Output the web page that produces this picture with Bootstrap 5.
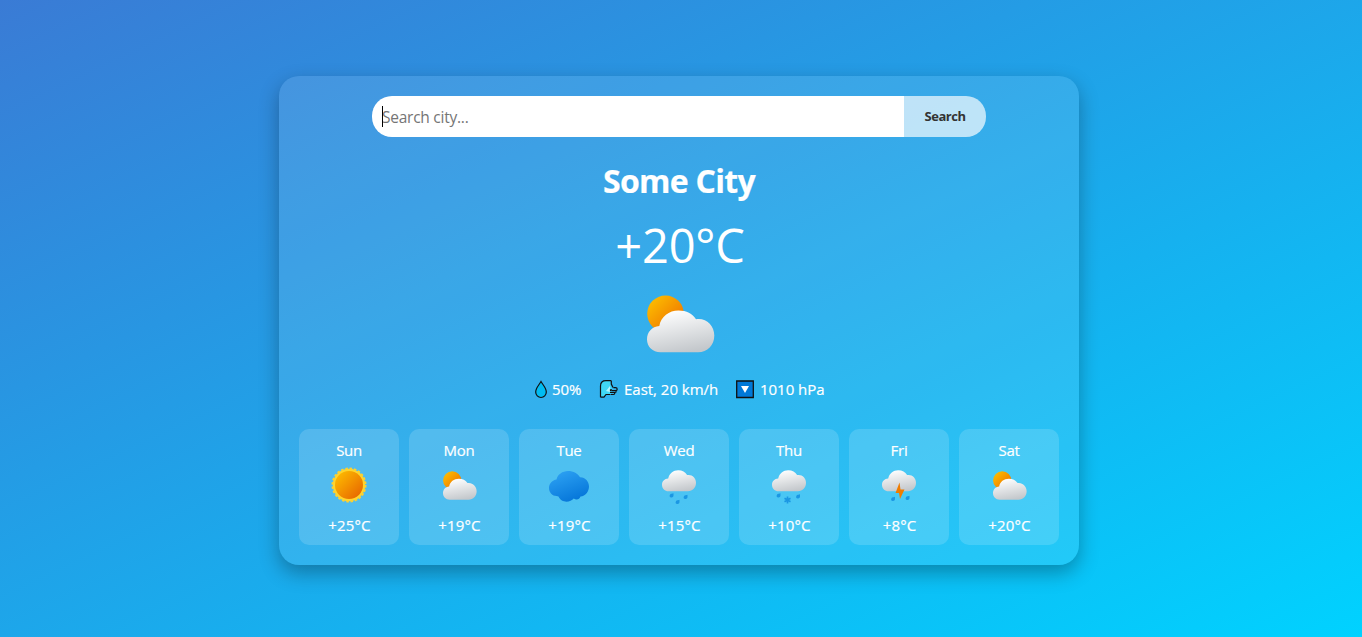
<!DOCTYPE html>
<html lang="en">
<head>
<meta charset="utf-8">
<meta name="viewport" content="width=device-width, initial-scale=1">
<title>Weather</title>
<link rel="stylesheet" href="https://cdn.jsdelivr.net/npm/bootstrap@5.3.0/dist/css/bootstrap.min.css">
<style>
body{font-family:"Open Sans","Noto Sans",sans-serif;background:linear-gradient(to bottom right,#3a7bd5,#00d2ff) no-repeat;color:#fff;height:637px;overflow:hidden}
.weather{width:800px;height:489px;margin:76px 0 0 279px;padding:20px;border-radius:20px;background:rgba(255,255,255,.1);box-shadow:0 8px 20px rgba(0,0,0,.3)}
.search-bar{width:614px;height:41px;margin:0 0 0 73px}
.search-bar input{width:532px;border:0;border-radius:20px 0 0 20px;padding:2px 10px 0;font-size:15.5px;letter-spacing:-.25px;outline:0;color:#333;background:#fff}
.search-bar input::placeholder{color:#757575;opacity:1}
.caret{position:absolute;left:10px;top:10px;width:1px;height:21px;background:#000}
.search-bar button{width:82px;border:0;border-radius:0 20px 20px 0;background:rgba(255,255,255,.68);color:#333;font-weight:700;font-size:13px;letter-spacing:-.45px;padding:1px 0 0}
.city{font-size:32px;font-weight:700;line-height:43px;margin:22px 0 0;letter-spacing:-.7px;-webkit-text-stroke:.2px}
.temp{font-size:47px;line-height:64px;margin-top:11px;letter-spacing:-.2px;text-indent:2px}
.now-icon{height:58px;margin-top:18px;padding-left:3px}
.details{height:24px;margin-top:24px;padding-left:235px;font-size:15px;letter-spacing:-.02px;line-height:24px;-webkit-text-stroke:.2px}
.details span{white-space:nowrap;text-align:left}
.details svg{margin-top:2px;flex:none}
.hum{width:46px;margin-left:4px}
.wind{width:111px;margin-left:6px}
.press{margin-left:5px}
.forecast{gap:10px;margin-top:28px}
.day{width:100px;height:116px;border-radius:10px;background:rgba(255,255,255,.15);font-size:15px;line-height:22px;padding-top:10px;-webkit-text-stroke:.2px}
.day svg{display:block;margin:4px auto 9px}
.day div{letter-spacing:-.3px}
.day svg + div{letter-spacing:.15px;text-indent:1px}
svg{overflow:visible;-webkit-text-stroke:0}
</style>
</head>
<body>
<svg width="0" height="0" class="position-absolute" aria-hidden="true">
<defs>
<linearGradient id="sunG" x1="0" y1="0" x2="1" y2="1"><stop offset=".1" stop-color="#fdb900"/><stop offset=".9" stop-color="#e86800"/></linearGradient>
<linearGradient id="partG" x1="0" y1="0" x2="1" y2="1"><stop offset=".1" stop-color="#fdbd00"/><stop offset=".75" stop-color="#f07d00"/></linearGradient>
<linearGradient id="cloudG" x1=".3" y1="0" x2=".6" y2="1"><stop offset="0" stop-color="#fff"/><stop offset="1" stop-color="#c3c7cb"/></linearGradient>
<linearGradient id="blueG" x1=".2" y1="0" x2=".7" y2="1"><stop offset="0" stop-color="#2da2f3"/><stop offset="1" stop-color="#0474d8"/></linearGradient>
<symbol id="partly" viewBox="0 0 68 58"><circle cx="18.5" cy="18.8" r="18.300" fill="url(#partG)"/><path d="M13.500 57.300C5.500 57.300 0 51.500 0 44.500C0 37 5 31.500 12.300 31C14 21.500 22 15.500 31.500 15.500C39.500 15.500 45.500 18.500 49 24.200C59 22.500 67.300 30.500 67.300 40.500C67.300 50 60.500 57.300 51 57.300Z" fill="url(#cloudG)"/></symbol>
<symbol id="cloud" viewBox="0 0 34 22"><path d="M6.500 21.200C2.800 21.200 0 18.400 0 14.900C0 11.200 2.500 8.700 6.200 8.500C7.300 3.500 11.300 .3 16.200 .3C20.300 .3 23.300 2 25.100 5C30.200 4.200 34 7.900 34 12.700C34 17.600 30.700 21.200 25.900 21.200Z" fill="url(#cloudG)"/></symbol>
<symbol id="drop" viewBox="0 0 5 5"><path d="M4.500 .2V2.600C4.500 3.900 3.400 4.700 2.200 4.500C.8 4.300 .2 3 .9 1.900C1.400 1 2 .9 2.800 .8Z" fill="#1b97e3"/></symbol>
</defs></svg>
<main class="weather text-center">
<form class="search-bar d-flex position-relative" onsubmit="return false"><input type="text" placeholder="Search city..." aria-label="City"><span class="caret"></span><button type="submit">Search</button></form>
<h2 class="city">Some City</h2>
<div class="temp">+20°C</div>
<div class="now-icon"><svg class="d-block mx-auto" width="68" height="58"><use href="#partly"/></svg></div>
<div class="details d-flex">
<svg width="14" height="20" viewBox="0 0 14 20"><path d="M7 2.500C5 6 1.700 9 1.700 13A5 5.200 0 0 0 12.300 13C12.300 9 9 6 7 2.500Z" fill="#00bcf2" stroke="#111" stroke-width="1.200"/></svg><span class="hum">50%</span>
<svg width="20" height="20" viewBox="0 0 20 20"><path d="M2.700 17.500V6Q3 2 7 1.800H12.500V6L14.500 11.500H13V15H8.500L6.500 17.500Z" fill="#40d8f5"/><path d="M8 12L12 7V13Z" fill="#b5f5ff"/><path d="M2.500 18.200V7Q2.500 1.700 8 1.700H13.300M2.500 18.200H6L8 15.500H12.500M13.300 1.700V5L15 8.500M12.500 12.300V10.800H14M15.500 8.700H17.500Q19.200 8.700 19.200 10.300Q19.200 11.700 17.500 11.700H13.500M12 13.500H17Q18.300 13.500 18.300 12.300M13 15.500H15.500Q16.800 15.500 16.800 14" fill="none" stroke="#111" stroke-width="1.200"/></svg><span class="wind">East, 20 km/h</span>
<svg width="20" height="20" viewBox="0 0 20 20"><path d="M1.700 2H18.300V18.500H1.700Z" fill="#0078d7" stroke="#111" stroke-width="1.300"/><path d="M6 7H14L10 14Z" fill="#fff"/></svg><span class="press">1010 hPa</span>
</div>
<div class="forecast d-flex">
<section class="day"><div>Sun</div><svg width="36" height="40" viewBox="0 0 36 40"><circle cx="18" cy="20" r="16.200" fill="#ffd52e"/><circle cx="18" cy="20" r="16.600" fill="none" stroke="#fdd030" stroke-width="1.800" stroke-dasharray="2.600 1.750"/><circle cx="18" cy="20" r="14" fill="url(#sunG)"/></svg><div>+25°C</div></section>
<section class="day"><div>Mon</div><svg width="36" height="40" viewBox="0 0 36 40"><use href="#partly" x="2" y="6" width="34" height="29"/></svg><div>+19°C</div></section>
<section class="day"><div>Tue</div><svg width="40" height="40" viewBox="0 0 40 40"><path d="M7.500 31C3.500 31 0 27.500 0 23C0 18.500 3.500 15 7.500 14.500C8.500 9.500 13.500 6 19 6C24.500 6 29 8.500 31 12.300C36 12 40 16.500 40 21.500C40 26.500 36.500 31 31.500 31.500C30.500 34.500 27.500 35.500 24.700 33.500C21.500 37.500 12.500 38.500 9.500 31.500Z" fill="url(#blueG)"/></svg><div>+19°C</div></section>
<section class="day"><div>Wed</div><svg width="36" height="40" viewBox="0 0 36 40"><use href="#cloud" x="1" y="5" width="34" height="22"/><use href="#drop" x="8" y="28" width="5" height="5"/><use href="#drop" x="22" y="29.500" width="5" height="5"/><use href="#drop" x="14" y="34.500" width="5" height="5"/></svg><div>+15°C</div></section>
<section class="day"><div>Thu</div><svg width="36" height="40" viewBox="0 0 36 40"><use href="#cloud" x="1" y="5" width="34" height="22"/><use href="#drop" x="5" y="28" width="5" height="5"/><use href="#drop" x="24.500" y="29" width="5" height="5"/><path d="M16.500 31.500V38.500M13.500 33.200L19.500 36.800M19.500 33.200L13.500 36.800" stroke="#1b97e3" stroke-width="1.700"/></svg><div>+10°C</div></section>
<section class="day"><div>Fri</div><svg width="36" height="40" viewBox="0 0 36 40"><use href="#cloud" x="1" y="5" width="34" height="22"/><use href="#drop" x="9.500" y="31.500" width="5" height="5"/><use href="#drop" x="24" y="30.500" width="5" height="5"/><path d="M18.500 17.500L14.500 28H18L19 34L23.500 24.500H19.500Z" fill="#f07d00"/></svg><div>+8°C</div></section>
<section class="day"><div>Sat</div><svg width="36" height="40" viewBox="0 0 36 40"><use href="#partly" x="2" y="6" width="34" height="29"/></svg><div>+20°C</div></section>
</div>
</main>
<script src="https://cdn.jsdelivr.net/npm/bootstrap@5.3.0/dist/js/bootstrap.bundle.min.js"></script>
</body>
</html>
